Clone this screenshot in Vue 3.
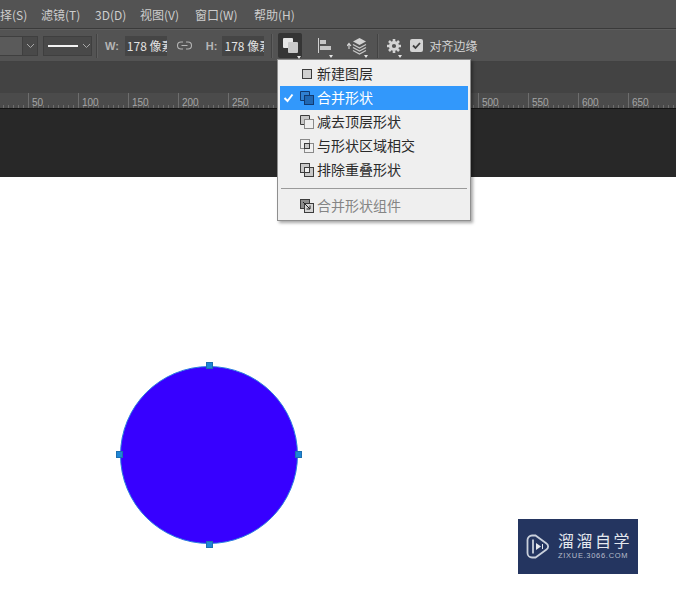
<template>
  <div class="ps-window">
    <nav class="menu-bar">
      <span v-for="item in menus" :key="item" class="menu-item">{{ item }}</span>
    </nav>

    <div class="options-bar">
      <div class="select shape-select">
        <span class="select-value"></span>
        <svg class="chevron" width="9" height="6" viewBox="0 0 9 6"><path d="M1 1l3.5 3.5L8 1" fill="none" stroke="#a8a8a8" /></svg>
      </div>
      <div class="select stroke-select">
        <span class="stroke-line"></span>
        <svg class="chevron" width="9" height="6" viewBox="0 0 9 6"><path d="M1 1l3.5 3.5L8 1" fill="none" stroke="#a8a8a8" /></svg>
      </div>
      <span class="divider first-divider"></span>
      <span class="field-label w-label">W:</span>
      <span class="size-input">178 像素</span>
      <svg class="link-icon" width="15" height="9" viewBox="0 0 15 9">
        <path d="M6 1H4a3.200 3.200 0 0 0 0 7h2M9 1h2a3.200 3.200 0 0 1 0 7H9M4.500 4.500h6" fill="none" stroke="#b4b4b4" stroke-width="1.100" />
      </svg>
      <span class="field-label h-label">H:</span>
      <span class="size-input">178 像素</span>
      <span class="divider second-divider"></span>

      <div class="tool-btn active">
        <svg width="17" height="17" viewBox="0 0 17 17">
          <rect x="1" y="1" width="10" height="10" rx="1" fill="#e6e6e6" />
          <rect x="6" y="5" width="10" height="11" rx="1" fill="#c9c9c9" />
        </svg>
        <i class="caret"></i>
      </div>
      <div class="tool-btn align-btn">
        <svg width="15" height="17" viewBox="0 0 15 17">
          <path d="M1.500 1v15" stroke="#d0d0d0" />
          <rect x="3" y="3" width="6" height="4" fill="#c6c6c6" />
          <rect x="3" y="9" width="11" height="4" fill="#c6c6c6" />
        </svg>
        <i class="caret"></i>
      </div>
      <div class="tool-btn layers-btn">
        <svg width="20" height="18" viewBox="0 0 20 18">
          <path d="M2 12V7M0 9l2-2.500L4 9" fill="none" stroke="#d8d8d8" stroke-width="1.100" />
          <path d="M12.500 1l6.500 3.500L12.500 8 6 4.500z" fill="#d2d2d2" />
          <path d="M6 7.500l6.500 3.500L19 7.500M6 10.500l6.500 3.500 6.500-3.500M6 13.500l6.500 3.500 6.500-3.500" fill="none" stroke="#c8c8c8" stroke-width="1.300" />
        </svg>
        <i class="caret"></i>
      </div>
      <span class="divider third-divider"></span>
      <div class="tool-btn gear-btn">
        <svg width="14" height="14" viewBox="0 0 14 14">
          <circle cx="7" cy="7" r="3.600" fill="none" stroke="#d4d4d4" stroke-width="3" />
          <path d="M7 0v2.500M7 11.500V14M0 7h2.500M11.500 7H14M2 2l1.800 1.800M10.200 10.200L12 12M12 2l-1.800 1.800M3.800 10.200L2 12" stroke="#d4d4d4" stroke-width="2.600" />
        </svg>
        <i class="caret"></i>
      </div>
      <span class="checkbox">
        <svg width="13" height="13" viewBox="0 0 13 13">
          <rect width="13" height="13" rx="2" fill="#d4d4d4" />
          <path d="M3 6.500l2.500 2.500L10 4" fill="none" stroke="#404040" stroke-width="1.800" />
        </svg>
      </span>
      <span class="check-label">对齐边缘</span>
    </div>

    <div class="tab-strip"></div>

    <div class="ruler">
      <div v-for="mark in rulerMarks" :key="mark.at" class="ruler-cell">
        <span v-if="mark.label" class="ruler-label">{{ mark.at }}</span>
      </div>
    </div>

    <div class="pasteboard"></div>

    <main class="canvas">
      <div class="circle"></div>
      <span v-for="h in handles" :key="h" class="handle" :class="h"></span>

      <div class="watermark">
        <svg width="23" height="25" viewBox="0 0 23 25">
          <path d="M7 5.500v14M9.500 1.500H6A4.500 4.500 0 0 0 1.500 6v13A4.500 4.500 0 0 0 6 23.500h3.500l11-8a3.600 3.600 0 0 0 0-6l-11-8z" fill="none" stroke="#c9d0dc" stroke-width="1.800" />
          <path d="M10 9l5 3.500-5 3.500z" fill="#e4e8ee" />
          <path d="M16.500 10v5" stroke="#e4e8ee" />
        </svg>
        <div class="wm-text">
          <div class="wm-title">溜溜自学</div>
          <div class="wm-url">ZIXUE.3066.COM</div>
        </div>
      </div>
    </main>

    <div class="dropdown">
      <div
        v-for="opt in options"
        :key="opt.label"
        class="dropdown-item"
        :class="{ selected: opt.selected }"
      >
        <svg v-if="opt.selected" class="tick" width="11" height="10" viewBox="0 0 11 10">
          <path d="M1.500 5l3 3L9.500 1.500" fill="none" stroke="#fff" stroke-width="2" />
        </svg>
        <svg class="opt-icon" width="16" height="16" viewBox="0 0 16 16">
          <template v-if="opt.icon === 'new'">
            <rect x="3.500" y="3.500" width="9" height="9" fill="#cfcfcf" stroke="#3c3c3c" />
          </template>
          <template v-else-if="opt.icon === 'merge'">
            <path d="M1.500 1.500h9v4h4v9h-9v-4h-4z" fill="#2f7fd0" stroke="#123a70" />
            <rect x="5.500" y="5.500" width="9" height="9" fill="#2068b4" stroke="#123a70" />
          </template>
          <template v-else-if="opt.icon === 'subtract'">
            <path d="M1.500 1.500h9v4h-5v5h-4z" fill="#c8c8c8" stroke="#3c3c3c" />
            <rect x="5.500" y="5.500" width="9" height="9" fill="#f0f0f0" stroke="#8a8a8a" />
          </template>
          <template v-else-if="opt.icon === 'intersect'">
            <rect x="1.500" y="1.500" width="9" height="9" fill="#f0f0f0" stroke="#8a8a8a" />
            <rect x="5.500" y="5.500" width="9" height="9" fill="#f0f0f0" stroke="#8a8a8a" />
            <rect x="5.500" y="5.500" width="5" height="5" fill="#c8c8c8" stroke="#3c3c3c" />
          </template>
          <template v-else-if="opt.icon === 'exclude'">
            <rect x="1.500" y="1.500" width="9" height="9" fill="#c8c8c8" stroke="#3c3c3c" />
            <rect x="5.500" y="5.500" width="9" height="9" fill="#c8c8c8" stroke="#3c3c3c" />
            <rect x="5.500" y="5.500" width="5" height="5" fill="#f0f0f0" stroke="#3c3c3c" />
          </template>
          <template v-else>
            <rect x="1.500" y="1.500" width="9" height="9" fill="#8d8d8d" stroke="#3c3c3c" />
            <rect x="5.500" y="5.500" width="9" height="9" fill="#d4d4d4" stroke="#3c3c3c" />
            <path d="M4 4l7 7M11 7.500V11H7.500" fill="none" stroke="#222" />
          </template>
        </svg>
        <span class="opt-label" :class="{ muted: opt.disabled }">{{ opt.label }}</span>
      </div>
    </div>
  </div>
</template>

<script setup>
const menus = ['择(S)', '滤镜(T)', '3D(D)', '视图(V)', '窗口(W)', '帮助(H)'];

// ticks from 300 to 450 sit under the open menu, so they carry no number
const rulerMarks = [50, 100, 150, 200, 250, 300, 350, 400, 450, 500, 550, 600, 650].map((at) => ({
  at,
  label: at < 300 || at > 450,
}));

const handles = ['top', 'right', 'bottom', 'left'];

const options = [
  { label: '新建图层', icon: 'new' },
  { label: '合并形状', icon: 'merge', selected: true },
  { label: '减去顶层形状', icon: 'subtract' },
  { label: '与形状区域相交', icon: 'intersect' },
  { label: '排除重叠形状', icon: 'exclude' },
  { label: '合并形状组件', icon: 'component', disabled: true },
];
</script>

<style>
html,
body {
  margin: 0;
  background: #fff;
  overflow: hidden;
}
</style>

<style scoped>
.ps-window {
  position: relative;
  width: 676px;
  height: 589px;
  display: flex;
  flex-direction: column;
  overflow: hidden;
  font-family: "Noto Sans CJK SC", "Liberation Sans", sans-serif;
  background: #fff;
}

.menu-bar {
  height: 28px;
  flex: none;
  display: grid;
  grid-template-columns: 41px 54px 45px 55px 59px auto;
  align-items: center;
  background: #535353;
  border-bottom: 1px solid #3a3a3a;
  color: #cdcdcd;
  font-size: 12px;
  white-space: nowrap;
}

.options-bar {
  height: 33px;
  flex: none;
  display: flex;
  align-items: center;
  background: #535353;
  border-top: 1px solid #5d5d5d;
  box-sizing: border-box;
  border-bottom: 1px solid #424242;
}

.select {
  height: 20px;
  box-sizing: border-box;
  display: flex;
  align-items: center;
  border: 1px solid #3f3f3f;
  background: #494949;
}

.shape-select {
  width: 38px;
  border-left: none;
}

.select-value {
  width: 22px;
  height: 18px;
  border-right: 1px solid #3f3f3f;
  background: #5a5a5a;
}

.shape-select .chevron {
  margin-left: 3px;
}

.stroke-select {
  width: 49px;
  margin-left: 5px;
  padding-left: 4px;
}

.stroke-line {
  width: 30px;
  height: 2px;
  background: #f2f2f2;
}

.stroke-select .chevron {
  margin-left: 4px;
}

.divider {
  width: 1px;
  height: 24px;
  background: #434343;
  border-right: 1px solid #5e5e5e;
  flex: none;
}

.first-divider {
  margin-left: 4px;
}

.second-divider {
  margin-left: 7px;
}

.third-divider {
  margin-left: 10px;
}

.field-label {
  color: #b6b6b6;
  font-family: "Liberation Sans", sans-serif;
  font-size: 11px;
  font-weight: 700;
}

.w-label {
  margin-left: 7px;
  margin-right: 6px;
}

.h-label {
  margin-left: 14px;
  margin-right: 5px;
}

.size-input {
  width: 42px;
  height: 20px;
  line-height: 20px;
  box-sizing: border-box;
  padding-left: 2px;
  overflow: hidden;
  white-space: nowrap;
  background: #454545;
  color: #e2e2e2;
  font-size: 12px;
}

.link-icon {
  margin-left: 10px;
}

.tool-btn {
  position: relative;
  display: flex;
  align-items: center;
  justify-content: center;
  flex: none;
}

.tool-btn.active {
  width: 24px;
  height: 25px;
  margin-left: 5px;
  background: #353535;
  border-radius: 2px;
}

.align-btn {
  width: 15px;
  height: 24px;
  margin-left: 15px;
}

.layers-btn {
  width: 20px;
  height: 24px;
  margin-left: 15px;
}

.gear-btn {
  width: 14px;
  height: 24px;
  margin-left: 8px;
}

.caret {
  position: absolute;
  right: -1px;
  bottom: 0;
  border: 2px solid transparent;
  border-top: 3px solid #e6e6e6;
  border-bottom: none;
}

.active .caret {
  right: 1px;
  bottom: -1px;
}

.checkbox {
  display: flex;
  margin-left: 9px;
}

.check-label {
  margin-left: 6px;
  color: #d2d2d2;
  font-size: 12px;
  white-space: nowrap;
}

.tab-strip {
  height: 31px;
  flex: none;
  background: #434343;
}

.ruler {
  height: 16px;
  flex: none;
  display: flex;
  padding-left: 28px;
  box-sizing: border-box;
  background-color: #4b4b4b;
  background-image: repeating-linear-gradient(
    to right,
    #6d6d6d 0 1px,
    transparent 1px 5px
  );
  background-size: 100% 3px;
  background-repeat: no-repeat;
  background-position: 3px bottom;
  border-bottom: 1px solid #141414;
}

.ruler-cell {
  width: 50px;
  flex: none;
  box-sizing: border-box;
  border-left: 1px solid #6d6d6d;
  padding-left: 3px;
  line-height: 13px;
}

.ruler-label {
  color: #a5a5a5;
  font-family: "Liberation Sans", sans-serif;
  font-size: 10px;
}

.pasteboard {
  height: 68px;
  flex: none;
  background: #282828;
}

.canvas {
  position: relative;
  flex: 1;
  background: #fff;
}

.circle {
  position: absolute;
  left: 120px;
  top: 189px;
  width: 178px;
  height: 178px;
  box-sizing: border-box;
  border: 1px solid #2b7fe0;
  border-radius: 50%;
  background: #3700ff;
}

.handle {
  position: absolute;
  width: 7px;
  height: 7px;
  background: #1e86d6;
  box-shadow: inset 0 0 0 1px #1d6fb0;
}

.handle.top {
  left: 206px;
  top: 185px;
}

.handle.right {
  left: 295px;
  top: 274px;
}

.handle.bottom {
  left: 206px;
  top: 364px;
}

.handle.left {
  left: 116px;
  top: 274px;
}

.watermark {
  position: absolute;
  left: 518px;
  top: 342px;
  width: 120px;
  height: 55px;
  box-sizing: border-box;
  display: flex;
  align-items: center;
  gap: 9px;
  padding-left: 8px;
  background: #243560;
}

.wm-title {
  color: #e4e8ee;
  font-size: 16px;
  line-height: 23px;
  letter-spacing: 2.500px;
  white-space: nowrap;
}

.wm-url {
  color: #b5bcca;
  font-family: "Liberation Sans", sans-serif;
  font-size: 7.500px;
  line-height: 8px;
  letter-spacing: 0.700px;
  white-space: nowrap;
}

.wm-text {
  margin-top: -4px;
}

.dropdown {
  position: absolute;
  left: 277px;
  top: 59px;
  width: 194px;
  height: 162px;
  box-sizing: border-box;
  padding: 2px 2px;
  background: #efefef;
  border: 1px solid #8f8f8f;
  box-shadow: 2px 2px 3px rgba(0, 0, 0, 0.35);
}

.dropdown-item {
  position: relative;
  height: 24px;
  display: flex;
  align-items: center;
  padding-left: 19px;
  color: #2a2a2a;
  font-size: 14px;
  white-space: nowrap;
}

.dropdown-item:last-child {
  margin-top: 12px;
}

.dropdown-item:last-child::before {
  content: "";
  position: absolute;
  left: 1px;
  right: 1px;
  top: -6px;
  height: 1px;
  background: #9a9a9a;
}

.dropdown-item.selected {
  background: #3298fb;
  color: #fff;
}

.tick {
  position: absolute;
  left: 3px;
  top: 7px;
}

.opt-label {
  margin-left: 2px;
  margin-top: -2px;
}

.opt-label.muted {
  color: #858585;
}
</style>
